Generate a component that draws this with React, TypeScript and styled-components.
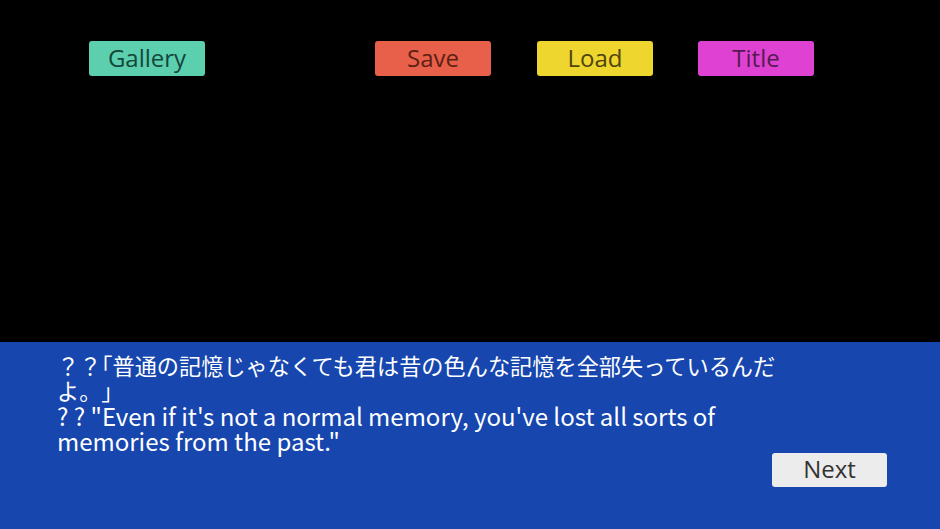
import React from 'react';
import styled, { createGlobalStyle } from 'styled-components';

const GlobalStyle = createGlobalStyle`
  html, body {
    margin: 0;
    padding: 0;
    background: #000;
  }
  #root {
    width: 940px;
    height: 529px;
  }
`;

const Screen = styled.div`
  width: 940px;
  height: 529px;
  display: flex;
  flex-direction: column;
  background: #000;
  overflow: hidden;
`;

const Stage = styled.div`
  flex: 0 0 342px;
  padding: 41px 0 0 89px;
  box-sizing: border-box;
`;

const Menu = styled.div`
  display: flex;
  align-items: center;
`;

const MenuButton = styled.button<{ $bg: string; $fg: string; $gap?: number }>`
  width: 116px;
  height: 35px;
  margin-left: ${({ $gap }) => $gap ?? 0}px;
  padding: 0 0 2px;
  border: none;
  border-radius: 3px;
  background: ${({ $bg }) => $bg};
  color: ${({ $fg }) => $fg};
  font-family: 'Open Sans', 'Noto Sans', sans-serif;
  font-size: 24px;
  line-height: 33px;
`;

const Dialog = styled.div`
  flex: 1;
  background: #1646ae;
  padding: 11px 0 0 57px;
  box-sizing: border-box;
  display: flex;
  flex-direction: column;
`;

const Message = styled.div`
  width: 740px;
  color: #fff;
  font-family: 'Noto Sans CJK JP', sans-serif;
  line-height: 25px;
`;

const Japanese = styled.p`
  margin: 0;
  font-size: 22.2px;
  text-spacing-trim: space-all;
`;

const Half = styled.span`
  font-feature-settings: 'halt' 1;
`;

const English = styled.p`
  margin: 0;
  font-size: 24px;
`;

const Footer = styled.div`
  display: flex;
  justify-content: flex-end;
  padding-right: 53px;
`;

const NextButton = styled.button`
  width: 115px;
  height: 34px;
  padding: 0 0 2px;
  border: none;
  border-radius: 3px;
  background: #ececec;
  color: #333;
  font-family: 'Open Sans', 'Noto Sans', sans-serif;
  font-size: 24px;
  line-height: 32px;
`;

const App: React.FC = () => (
  <>
    <GlobalStyle />
    <Screen>
      <Stage>
        <Menu>
          <MenuButton $bg="#5ccfae" $fg="#14473a">Gallery</MenuButton>
          <MenuButton $bg="#e8604a" $fg="#5e1f14" $gap={170}>Save</MenuButton>
          <MenuButton $bg="#efd62e" $fg="#4f440a" $gap={46}>Load</MenuButton>
          <MenuButton $bg="#df42d3" $fg="#561a52" $gap={45}>Title</MenuButton>
        </Menu>
      </Stage>
      <Dialog>
        <Message>
          <Japanese>
            ？？<Half>「</Half>普通の記憶じゃなくても君は昔の色んな記憶を全部失っているんだよ。」
          </Japanese>
          <English>? ? "Even if it's not a normal memory, you've lost all sorts of memories from the past."</English>
        </Message>
        <Footer>
          <NextButton>Next</NextButton>
        </Footer>
      </Dialog>
    </Screen>
  </>
);

export default App;
